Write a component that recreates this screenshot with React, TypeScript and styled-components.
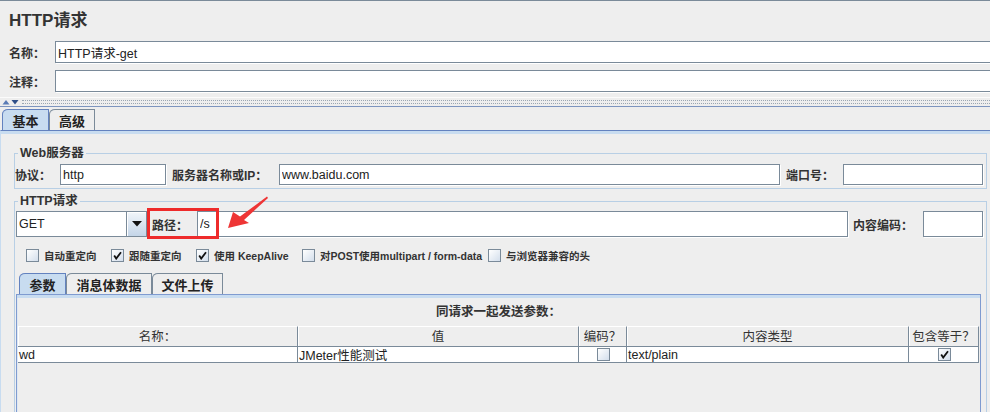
import React from "react";
import styled, { createGlobalStyle } from "styled-components";

const GlobalStyle = createGlobalStyle`
  html, body {
    margin: 0;
    padding: 0;
    background: #eeeeee;
  }
  * {
    box-sizing: border-box;
  }
`;

const font = `"Liberation Sans", "Noto Sans CJK SC", sans-serif`;

const Page = styled.div`
  position: relative;
  width: 990px;
  height: 412px;
  overflow: hidden;
  background: #eeeeee;
  border-top: 1px solid #7a8a99;
  font-family: ${font};
  color: #333333;
`;

const Header = styled.div`
  padding: 9px 0 0 9px;
`;

const Title = styled.h1`
  margin: 0;
  font-size: 17px;
  font-weight: bold;
  line-height: 22px;
  color: #333333;
`;

const FormRow = styled.div<{ $top?: number }>`
  display: flex;
  align-items: center;
  margin-top: ${(p) => p.$top ?? 0}px;
`;

const Label = styled.label<{ $w: number; $ml?: number }>`
  flex: none;
  width: ${(p) => p.$w}px;
  margin-left: ${(p) => p.$ml ?? 0}px;
  font-size: 12px;
  font-weight: bold;
  white-space: nowrap;
  color: #333333;
`;

const TextField = styled.input<{ $w?: number; $h: number; $bleed?: boolean }>`
  flex: ${(p) => (p.$w ? "none" : "1 1 auto")};
  width: ${(p) => (p.$w ? `${p.$w}px` : "auto")};
  min-width: 0;
  height: ${(p) => p.$h}px;
  margin: 0 ${(p) => (p.$bleed ? -4 : 0)}px 0 0;
  padding: 0 2px;
  border: 1px solid #7a8a99;
  background: #ffffff;
  box-shadow: 1px 1px 0 #ffffff;
  font: 12.5px ${font};
  color: #222222;
  outline: none;
`;

const Splitter = styled.div`
  display: flex;
  align-items: center;
  gap: 2px;
  margin-top: 5px;
  height: 10px;
  padding-left: 2px;
  border-top: 1px solid #fbfbfb;
  border-bottom: 1px solid #7d95bf;
`;

const Grip = styled.div`
  flex: 1;
  height: 4px;
  border-top: 1px dotted #9aa6b3;
  border-bottom: 1px dotted #9aa6b3;
`;

const TabBar = styled.div<{ $pl: number; $mt?: number; $mr?: number }>`
  display: flex;
  align-items: flex-end;
  height: 23px;
  padding-left: ${(p) => p.$pl}px;
  margin-top: ${(p) => p.$mt ?? 0}px;
  margin-right: ${(p) => p.$mr ?? 0}px;
`;

const Tab = styled.div<{ $active?: boolean; $w: number }>`
  width: ${(p) => p.$w}px;
  height: 21px;
  display: flex;
  align-items: center;
  justify-content: center;
  border: 1px solid ${(p) => (p.$active ? "#6382bf" : "#7a8a99")};
  border-bottom: none;
  border-top-left-radius: 6px 5px;
  background: ${(p) => (p.$active ? "#c8dcf0" : "#eeeeee")};
  font-size: 13px;
  font-weight: bold;
  color: #222222;
  padding-top: 1px;
`;

const TabPanel = styled.div`
  border-top: 1px solid #6382bf;
  border-left: 1px solid #c8dcf0;
  box-shadow: inset 0 3px 0 #c8dcf0;
  padding: 14px 3px 0 13px;
`;

const Group = styled.fieldset<{ $pl: number; $mt?: number; $tall?: boolean }>`
  margin: ${(p) => p.$mt ?? 0}px 0 0 0;
  min-width: 0;
  padding: ${(p) => (p.$tall ? "2px 1px 0" : "3px 3px 3px")} ${(p) => p.$pl}px;
  padding-right: 3px;
  border: 1px solid #b8cfe5;
  min-height: ${(p) => (p.$tall ? "260px" : "0")};

  & > legend {
    margin-left: ${(p) => 3 - p.$pl}px;
    padding: 0 2px;
    font-size: 12.5px;
    font-weight: bold;
    line-height: 16px;
    color: #333333;
  }
`;

const Combo = styled.div`
  flex: none;
  display: flex;
  width: 131px;
  height: 26px;
`;

const ComboValue = styled.div`
  flex: 1;
  display: flex;
  align-items: center;
  padding-left: 2px;
  background: #ffffff;
  border: 1px solid #7a8a99;
  font-size: 12.5px;
  color: #222222;
`;

const ComboButton = styled.div`
  flex: none;
  width: 20px;
  display: flex;
  align-items: center;
  justify-content: center;
  border: 1px solid #7a8a99;
  border-left: none;
  background: linear-gradient(#f2f6fa, #c4d5e8);
  box-shadow: inset 1px 1px 0 #ffffff;
`;

const Options = styled.div`
  display: flex;
  align-items: center;
  height: 16px;
  margin-top: 10px;
  padding-left: 10px;
`;

const Option = styled.label<{ $w?: number }>`
  flex: none;
  display: flex;
  align-items: center;
  gap: 5px;
  width: ${(p) => (p.$w ? `${p.$w}px` : "auto")};
  font-size: 10.5px;
  font-weight: bold;
  white-space: nowrap;
  color: #333333;
`;

const Box = styled.span`
  flex: none;
  display: inline-flex;
  align-items: center;
  justify-content: center;
  width: 13px;
  height: 13px;
  border: 1px solid #7a8a99;
  background: linear-gradient(135deg, #ffffff 0%, #d3deec 100%);
`;

const SubPanel = styled.div`
  height: 160px;
  margin-right: 2px;
  border: 1px solid #7f9bd0;
  border-bottom: none;
  box-shadow: inset 0 3px 0 #c8dcf0, inset 1px 0 0 #dfe8f3;
  padding: 3px 1px 0 1px;
`;

const Caption = styled.div`
  height: 28px;
  line-height: 28px;
  text-align: center;
  font-size: 12.5px;
  font-weight: bold;
  color: #333333;
`;

const Grid = styled.div`
  display: grid;
  grid-template-columns: 280px 281px 48px 282px 1fr;
`;

const HeadCell = styled.div`
  height: 21px;
  line-height: 20px;
  text-align: center;
  font-size: 12.5px;
  color: #333333;
  border-top: 1px solid #ffffff;
  border-bottom: 1px solid #7a8a99;
  border-right: 1px solid #7a8a99;
  box-shadow: inset 1px 0 0 #ffffff;
`;

const Cell = styled.div<{ $center?: boolean }>`
  height: 16px;
  display: flex;
  align-items: center;
  justify-content: ${(p) => (p.$center ? "center" : "flex-start")};
  padding-left: 1px;
  background: #ffffff;
  border-right: 1px solid #7a8a99;
  border-bottom: 1px solid #7a8a99;
  font-size: 12.5px;
  color: #222222;
`;

const Highlight = styled.div`
  position: absolute;
  left: 147px;
  top: 207px;
  width: 72px;
  height: 31px;
  border: 3px solid #ee2b2b;
  pointer-events: none;
`;

const Pointer = styled.svg`
  position: absolute;
  left: 220px;
  top: 190px;
`;

const Check = ({ on }: { on?: boolean }) => (
  <Box>
    {on && (
      <svg width="9" height="9" viewBox="0 0 9 9">
        <path d="M1.2 4.6 L3.2 7.6 L8 1.2" fill="none" stroke="#111" strokeWidth="1.8" />
      </svg>
    )}
  </Box>
);

const options = [
  { text: "自动重定向", w: 85 },
  { text: "跟随重定向", w: 85, on: true },
  { text: "使用 KeepAlive", w: 106, on: true },
  { text: "对POST使用multipart / form-data", w: 186 },
  { text: "与浏览器兼容的头" },
];

export default function App() {
  return (
    <>
      <GlobalStyle />
      <Page>
        <Header>
          <Title>HTTP请求</Title>
          <FormRow $top={9}>
            <Label $w={46}>名称：</Label>
            <TextField $h={22} $bleed defaultValue="HTTP请求-get" />
          </FormRow>
          <FormRow $top={7}>
            <Label $w={46}>注释：</Label>
            <TextField $h={22} $bleed />
          </FormRow>
        </Header>

        <Splitter>
          <svg width="18" height="6" viewBox="0 0 18 6">
            <polygon points="0.5,5.5 4,1 7.5,5.5" fill="#5a7bb5" />
            <polygon points="9.5,1 16.5,1 13,5.5" fill="#2f4f88" />
          </svg>
          <Grip />
        </Splitter>

        <TabBar $pl={2}>
          <Tab $active $w={47}>基本</Tab>
          <Tab $w={46}>高级</Tab>
        </TabBar>

        <TabPanel>
          <Group $pl={0}>
            <legend>Web服务器</legend>
            <FormRow>
              <Label $w={45}>协议：</Label>
              <TextField $w={106} $h={21} defaultValue="http" />
              <Label $w={107} $ml={6}>服务器名称或IP：</Label>
              <TextField $h={21} defaultValue="www.baidu.com" />
              <Label $w={57} $ml={6}>端口号：</Label>
              <TextField $w={140} $h={21} />
            </FormRow>
          </Group>

          <Group $pl={1} $mt={4} $tall>
            <legend>HTTP请求</legend>
            <FormRow>
              <Combo>
                <ComboValue>GET</ComboValue>
                <ComboButton>
                  <svg width="10" height="6" viewBox="0 0 10 6">
                    <polygon points="0,0 10,0 5,5.5" fill="#111" />
                  </svg>
                </ComboButton>
              </Combo>
              <Label $w={45} $ml={5}>路径：</Label>
              <TextField $h={26} defaultValue="/s" />
              <Label $w={70} $ml={5}>内容编码：</Label>
              <TextField $w={60} $h={26} />
            </FormRow>

            <Options>
              {options.map((o) => (
                <Option key={o.text} $w={o.w}>
                  <Check on={o.on} />
                  {o.text}
                </Option>
              ))}
            </Options>

            <TabBar $pl={3} $mt={8} $mr={2}>
              <Tab $active $w={47}>参数</Tab>
              <Tab $w={86}>消息体数据</Tab>
              <Tab $w={71}>文件上传</Tab>
            </TabBar>
            <SubPanel>
              <Caption>同请求一起发送参数：</Caption>
              <Grid>
                <HeadCell>名称：</HeadCell>
                <HeadCell>值</HeadCell>
                <HeadCell>编码？</HeadCell>
                <HeadCell>内容类型</HeadCell>
                <HeadCell>包含等于？</HeadCell>
                <Cell>wd</Cell>
                <Cell>JMeter性能测试</Cell>
                <Cell $center>
                  <Check />
                </Cell>
                <Cell>text/plain</Cell>
                <Cell $center>
                  <Check on />
                </Cell>
              </Grid>
            </SubPanel>
          </Group>
        </TabPanel>

        <Highlight />
        <Pointer width="52" height="42" viewBox="0 0 52 42">
          <polygon
            points="8,37 13,21 20,25.5 47,5.5 48,7 24,29 29,32"
            fill="#ee3535"
          />
        </Pointer>
      </Page>
    </>
  );
}
